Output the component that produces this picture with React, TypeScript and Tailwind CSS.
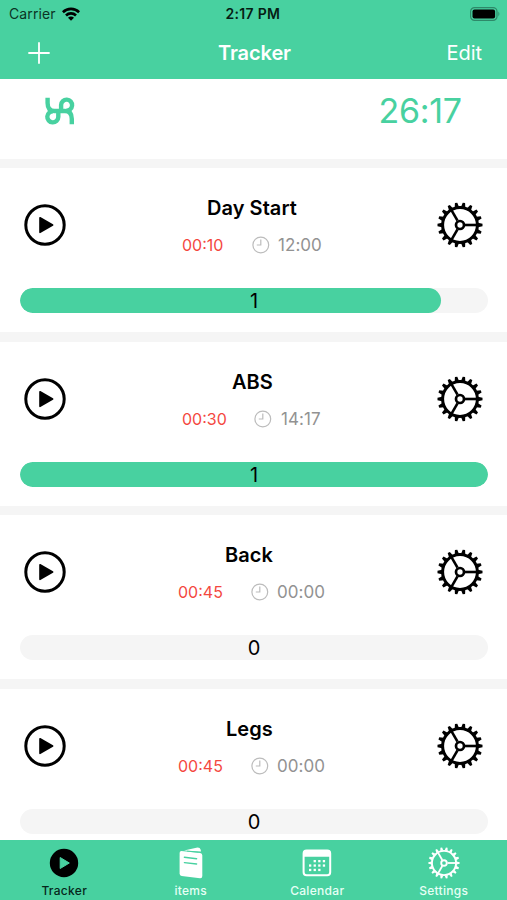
import React from "react";

type Item = {
  title: string;
  titleClass: string;
  duration: string;
  durationClass: string;
  clockClass: string;
  time: string;
  count: number;
  progress: number;
};

const items: Item[] = [
  { title: "Day Start", titleClass: "pl-[207px]", duration: "00:10", durationClass: "w-[70px] ml-[182px]", clockClass: "w-[26px]", time: "12:00", count: 1, progress: 90 },
  { title: "ABS", titleClass: "pl-[232px]", duration: "00:30", durationClass: "w-[72px] ml-[182px]", clockClass: "w-[27px]", time: "14:17", count: 1, progress: 100 },
  { title: "Back", titleClass: "pl-[225px]", duration: "00:45", durationClass: "w-[73px] ml-[178px]", clockClass: "w-[26px]", time: "00:00", count: 0, progress: 0 },
  { title: "Legs", titleClass: "pl-[226px]", duration: "00:45", durationClass: "w-[73px] ml-[178px]", clockClass: "w-[26px]", time: "00:00", count: 0, progress: 0 },
];

const teeth = Array.from({ length: 18 }, (_, i) => i * 20);

function Gear({ className, thin = false }: { className: string; thin?: boolean }) {
  return (
    <svg viewBox="-23 -23 46 46" className={className} fill="none" stroke="currentColor">
      <circle r="17.4" strokeWidth={thin ? 2.8 : 3} />
      {teeth.map((a) => (
        <path key={a} d="M18 -2.2 L22.5 -1.2 V1.2 L18 2.2 Z" fill="currentColor" stroke="none" transform={`rotate(${a})`} />
      ))}
      <circle r="4" strokeWidth="2.7" />
      {[0, 120, 240].map((a) => (
        <path key={a} d="M5 0H18" strokeWidth="2.6" transform={`rotate(${a})`} />
      ))}
    </svg>
  );
}

function Play() {
  return (
    <svg viewBox="0 0 42 42" className="h-[42px] w-[42px] text-black">
      <circle cx="21" cy="21" r="19.2" fill="none" stroke="currentColor" strokeWidth="3" />
      <path d="M16 13.7 28.6 21 16 28.3Z" fill="currentColor" stroke="currentColor" strokeWidth="1.6" strokeLinejoin="round" />
    </svg>
  );
}

function Clock() {
  return (
    <svg viewBox="0 0 18 18" className="h-[18px] w-[18px]" fill="none" stroke="#bcbcbc" strokeWidth="1.2">
      <circle cx="8.8" cy="9" r="7.9" />
      <path d="M8.8 3.6V9H4.8" />
    </svg>
  );
}

function Separator() {
  return <div className="h-[9.6px] bg-[#f5f5f5]" />;
}

function Card({ item }: { item: Item }) {
  return (
    <section className="bg-white">
      <div className="relative h-[120px] pt-[26px]">
        <h2 className={`h-[28px] text-[20px] font-semibold leading-[28px] tracking-[0.05px] text-black ${item.titleClass}`}>{item.title}</h2>
        <div className="mt-[13px] flex h-[20px] items-center text-[16px] leading-[20px]">
          <span className={`text-[#f4483f] ${item.durationClass}`}>{item.duration}</span>
          <span className={item.clockClass}><Clock /></span>
          <span className="text-[17px] tracking-[0.05px] text-[#929292]">{item.time}</span>
        </div>
        <button className="absolute left-[24px] top-[36px]"><Play /></button>
        <button className="absolute left-[437.3px] top-[34px] text-black"><Gear className="h-[46px] w-[46px]" /></button>
      </div>
      <div className="relative ml-[20px] h-[25px] w-[468px] overflow-hidden rounded-full bg-[#f5f5f5]">
        <div className="h-full rounded-full bg-[#48d1a0]" style={{ width: `${item.progress}%` }} />
        <span className="absolute inset-0 text-center text-[20px] leading-[26px] text-black">{item.count}</span>
      </div>
      <div className="h-[19px]" />
      <Separator />
    </section>
  );
}

function Tab({ label, active = false, children }: { label: string; active?: boolean; children: React.ReactNode }) {
  return (
    <div className={`flex w-[126.5px] flex-col items-center ${active ? "text-black" : "text-white"}`}>
      <div className="flex h-[44px] items-center justify-center pt-[2px]">{children}</div>
      <span className={`text-[12px] font-medium leading-[14px] tracking-[0.3px] ${active ? "text-[#06271b]" : "text-[#e6fff5]"}`}>{label}</span>
    </div>
  );
}

export default function App() {
  return (
    <div className="flex h-[900px] w-[507px] flex-col overflow-hidden bg-white font-['Inter','Liberation_Sans',sans-serif]">
      <header className="h-[79px] shrink-0 bg-[#48d1a0]">
        <div className="flex h-[27px] items-center text-[14px] leading-[27px] text-[#0b3425]">
          <span className="ml-[9px] w-[53px] tracking-[0.1px]">Carrier</span>
          <svg viewBox="0 0 18 14" className="h-[14px] w-[18px] text-black" fill="none" stroke="currentColor" strokeWidth="2.6">
            <path d="M.9 5.2A11.6 11.6 0 0 1 17.1 5.2M4 8.5a7 7 0 0 1 10 0" />
            <path d="M6 10.8a4.2 4.2 0 0 1 6 0L9 13.8Z" fill="currentColor" stroke="none" />
          </svg>
          <span className="ml-[145.5px] w-[60.5px] whitespace-nowrap text-[14px] font-semibold tracking-[0.3px] text-[#061d14]">2:17 PM</span>
          <svg viewBox="0 0 31 14" className="ml-[184px] h-[14px] w-[31px]">
            <rect x=".6" y=".6" width="26.4" height="12.8" rx="4" fill="none" stroke="#2e8969" strokeWidth="1.2" />
            <rect x="2.5" y="2.4" width="22.6" height="9.2" rx="2" fill="#000" />
            <path d="M28.4 4.6q2 2.4 0 4.8Z" fill="#2e8969" />
          </svg>
        </div>
        <div className="flex h-[52px] items-center text-white">
          <svg viewBox="0 0 22 22" className="ml-[28px] h-[22px] w-[22px]" stroke="currentColor" strokeWidth="1.8" strokeLinecap="round"><path d="M11 1V21M1 11H21" /></svg>
          <h1 className="ml-[168px] w-[228.5px] text-[20px] font-semibold leading-[28px] tracking-[-0.1px]">Tracker</h1>
          <span className="text-[20px] leading-[28px]">Edit</span>
        </div>
      </header>
      <main className="min-h-0 flex-1 overflow-hidden">
        <div className="flex h-[79.6px]">
          <svg viewBox="0 0 32 30" className="ml-[44px] mt-[17px] h-[30px] w-[32px]" fill="none" stroke="#48d1a0" strokeWidth="4.4">
            <path d="M3.6 1.8V7C3.6 12 6 15 10.5 15H21C25.5 15 27.8 18 27.8 23V28.2" />
            <path d="M22 14.6A5.5 5.5 0 1 0 17.1 9V13Q17.1 15 15.7 15Q14.3 15 14.3 17V21A5.5 5.5 0 1 1 9.4 15.4" />
          </svg>
          <span className="ml-[302.5px] mt-[11px] text-[34px] font-normal leading-[42px] tracking-[-0.3px] text-[#48d1a0]">26:17</span>
        </div>
        <Separator />
        {items.map((item) => <Card key={item.title} item={item} />)}
      </main>
      <nav className="flex h-[60px] shrink-0 bg-[#48d1a0] pl-[1px]">
        <Tab label="Tracker" active>
          <svg viewBox="0 0 30 30" className="h-[30px] w-[30px]"><circle cx="15" cy="15" r="14.2" fill="#000" /><path d="M11.2 9.5 20.3 15 11.2 20.5Z" fill="#48d1a0" stroke="#48d1a0" strokeLinejoin="round" /></svg>
        </Tab>
        <Tab label="items">
          <svg viewBox="0 0 26 32" className="h-[32px] w-[26px]">
            <path d="M6 3.5 18.4.7Q22 .1 22.6 2.5L23 4.4Z" fill="white" />
            <path d="M3.4 4 22.2 6Q24.3 6.4 24.3 8.5V29Q24.3 31.4 22 31.2L3.7 29Q1.6 28.7 1.6 26.5V6Q1.6 4 3.4 4Z" fill="white" />
            <path d="M9 4.1 20.5 5.3" stroke="#48d1a0" strokeWidth=".7" />
            <path d="M6.4 10.3 18.6 11.7M6.4 15.6 18.6 17" stroke="#48d1a0" strokeWidth="1.4" strokeLinecap="round" />
          </svg>
        </Tab>
        <Tab label="Calendar">
          <svg viewBox="0 0 30 28" className="h-[28px] w-[30px]">
            <rect x="1.6" y="1.6" width="26.6" height="24.6" rx="3" fill="none" stroke="white" strokeWidth="2" />
            <path d="M1.6 3.6Q1.6 1 4 1H26Q28.4 1 28.4 3.6V7.8H1.6Z" fill="white" />
            {[11, 15.4, 19.8].map((y, r) => [7, 11.6, 16.2, 20.8].map((x, c) => (r === 0 && c === 0) || (r === 2 && c === 3) ? null : <rect key={`${x}-${y}`} x={x} y={y} width="2.3" height="2.3" fill="white" />))}
          </svg>
        </Tab>
        <Tab label="Settings"><Gear className="h-[32px] w-[32px]" thin /></Tab>
      </nav>
    </div>
  );
}
